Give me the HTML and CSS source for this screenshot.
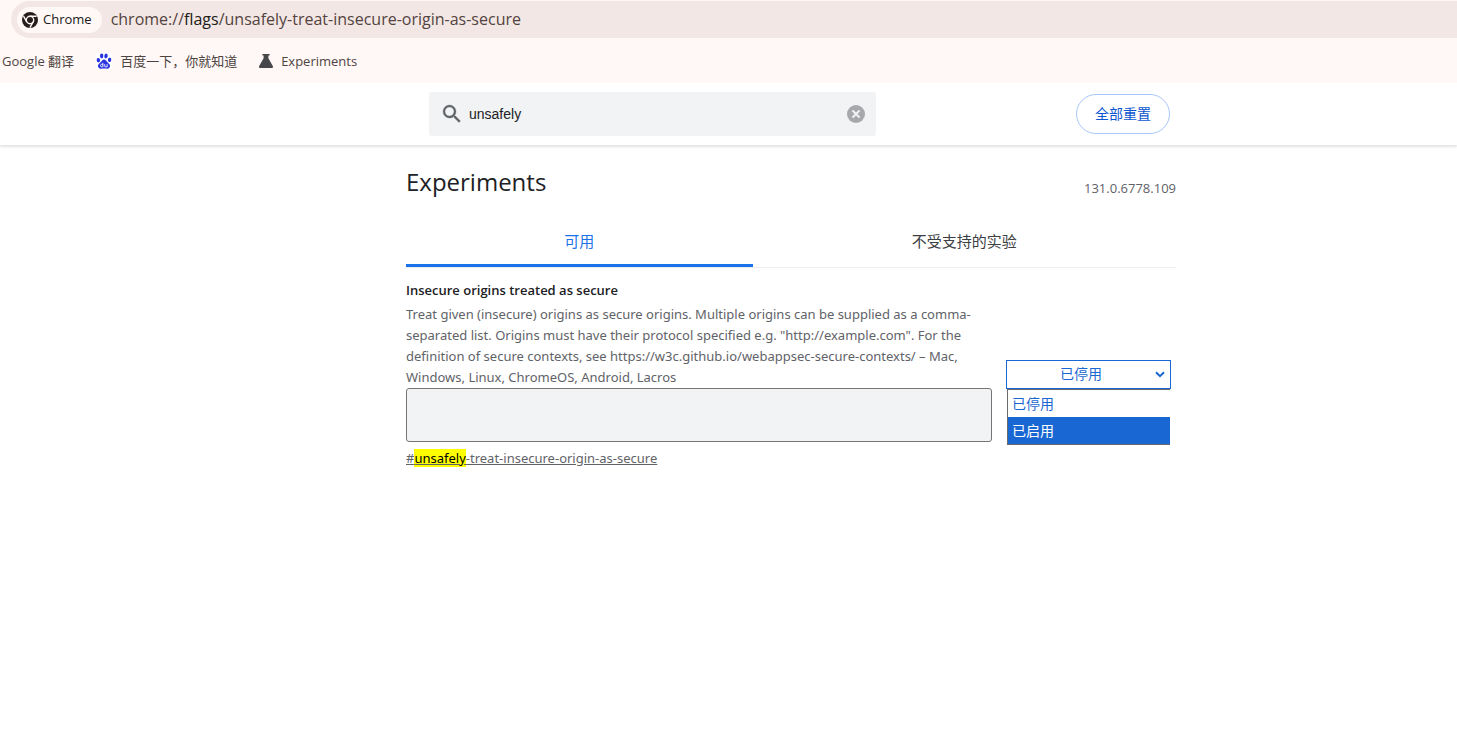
FILE: index.html
```html
<!DOCTYPE html>
<html lang="zh-CN">
<head>
<meta charset="utf-8">
<title>Experiments</title>
<link rel="stylesheet" href="styles.css">
</head>
<body>
<div class="browser">
  <div class="omnibox">
    <button class="chip" type="button">
      <svg width="16" height="16" viewBox="0 0 16 16" aria-hidden="true">
        <circle cx="8" cy="8" r="8" fill="#241d1c"/>
        <circle cx="8" cy="8" r="3.700" fill="none" stroke="#fff8f6" stroke-width="1.400"/>
        <path d="M8 4.300H14.600M4.800 9.850L1.500 4.100M11.200 9.850L7.900 15.600" stroke="#fff8f6" stroke-width="1.400"/>
      </svg>
      Chrome
    </button>
    <span class="url">chrome://<span class="url-host">flags</span>/unsafely-treat-insecure-origin-as-secure</span>
  </div>
  <nav class="bookmarks">
    <a href="#translate">Google 翻译</a>
    <a href="#baidu">
      <svg width="16" height="16" viewBox="0 0 16 16" aria-hidden="true">
        <rect width="16" height="16" fill="#fff"/>
        <g fill="#2932e1">
          <ellipse cx="2.4" cy="7.2" rx="1.7" ry="2.2" transform="rotate(-12 2.4 7.2)"/>
          <ellipse cx="5.7" cy="3" rx="1.7" ry="2.4"/>
          <ellipse cx="10" cy="3" rx="1.7" ry="2.4" transform="rotate(12 10 3)"/>
          <ellipse cx="13.6" cy="6.8" rx="1.7" ry="2.2" transform="rotate(12 13.6 6.8)"/>
          <path d="M8 6.600c1.700 0 2.300 1.500 3.400 2.600 1.300 1.200 2.800 2.200 2.600 4.100-.2 1.900-1.700 2.600-3.300 2.400-1.800-.3-3.600-.3-5.400 0-1.900.3-3.200-.8-3.300-2.600-.1-1.800 1.500-2.800 2.700-3.900C5.800 8.100 6.400 6.600 8 6.600z"/>
        </g>
        <path d="M6.900 9.800v4H5.500c-1.300 0-1.300-2.500 0-2.500h1.400M8.700 11.200v2c0 .5.300.7.800.7h1.600v-2.700" fill="none" stroke="#fff" stroke-width=".9"/>
      </svg>
      百度一下，你就知道
    </a>
    <a href="#experiments">
      <svg width="14" height="14" viewBox="0 0 14 14" aria-hidden="true">
        <path d="M3.400 0h7.200v1.400H9.400v2.800l4.400 7.800c.6 1-.1 2-1.200 2H1.400C.3 14-.4 13 .2 12l4.400-7.800V1.400H3.400z" fill="#45474a"/>
      </svg>
      Experiments
    </a>
  </nav>
</div>
<header class="toolbar">
  <div class="toolbar-inner">
    <div class="search">
      <svg width="24" height="24" viewBox="0 0 24 24" aria-hidden="true">
        <path d="M15.500 14h-.79l-.28-.27A6.470 6.470 0 0 0 16 9.500 6.500 6.500 0 1 0 9.500 16c1.610 0 3.090-.59 4.230-1.570l.27.28v.79l5 4.990L20.490 19l-4.990-5zm-6 0C7.010 14 5 11.990 5 9.500S7.010 5 9.500 5 14 7.010 14 9.500 11.990 14 9.500 14z" fill="#5f6368" stroke="#5f6368" stroke-width=".3"/>
      </svg>
      <input class="search-input" type="text" value="unsafely" aria-label="搜索实验">
      <button class="clear" type="button" aria-label="清除">
        <svg width="18" height="18" viewBox="0 0 18 18" aria-hidden="true">
          <circle cx="9" cy="9" r="9" fill="#a6a8ab"/>
          <path d="M5.500 5.500l7 7M12.500 5.500l-7 7" stroke="#f1f3f4" stroke-width="1.900"/>
        </svg>
      </button>
    </div>
    <button class="reset" type="button">全部重置</button>
  </div>
</header>
<main class="content">
  <div class="heading">
    <h1>Experiments</h1>
    <span class="version">131.0.6778.109</span>
  </div>
  <div class="tabs" role="tablist">
    <button class="tab tab-available selected" type="button" role="tab" aria-selected="true">可用</button>
    <button class="tab tab-unavailable" type="button" role="tab" aria-selected="false">不受支持的实验</button>
  </div>
  <section class="experiment">
    <div class="details">
      <h2>Insecure origins treated as secure</h2>
      <p>Treat given (insecure) origins as secure origins. Multiple origins can be supplied as a comma-separated list. Origins must have their protocol specified e.g. "http://example.com". For the definition of secure contexts, see https://w3c.github.io/webappsec-secure-contexts/ – Mac, Windows, Linux, ChromeOS, Android, Lacros</p>
      <textarea class="origins" aria-label="Insecure origins treated as secure"></textarea>
      <a class="permalink" href="#unsafely-treat-insecure-origin-as-secure">#<mark>unsafely</mark>-treat-insecure-origin-as-secure</a>
    </div>
    <div class="picker">
      <select class="state" aria-label="实验状态">
        <option>已停用</option>
        <option>已启用</option>
      </select>
      <svg class="chevron" width="10" height="7" viewBox="0 0 10 7" aria-hidden="true">
        <path d="M1 1.200l4 4 4-4" fill="none" stroke="#1967d2" stroke-width="2"/>
      </svg>
      <ul class="menu" role="listbox" aria-label="实验状态">
        <li role="option" aria-selected="false">已停用</li>
        <li class="active" role="option" aria-selected="true">已启用</li>
      </ul>
    </div>
  </section>
</main>
</body>
</html>
```
FILE: styles.css
```css
* {
  box-sizing: border-box;
}

body {
  margin: 0;
  background: #fff;
  color: #202124;
  font: 13px/21px "Open Sans", "Noto Sans CJK SC", sans-serif;
}

button,
input,
select,
textarea {
  font: inherit;
}

button {
  cursor: pointer;
}

.browser {
  background: #fff8f6;
}

.omnibox {
  display: flex;
  align-items: center;
  gap: 9px;
  height: 38px;
  margin-left: 11px;
  padding: 0 6px;
  background: #f2e7e4;
  border-radius: 19px 0 0 19px;
  border-top: 1px solid #fff8f6;
}

.chip {
  display: flex;
  align-items: center;
  gap: 5px;
  height: 26px;
  padding: 0 10px 0 5px;
  border: 0;
  border-radius: 13px;
  background: #fff8f6;
  color: #201a19;
}

.url {
  color: #534341;
  font-size: 16px;
}

.url-host {
  color: #201a19;
}

.bookmarks {
  display: flex;
  align-items: center;
  gap: 22px;
  height: 45px;
  padding: 1px 2px 0;
}

.bookmarks a {
  display: flex;
  align-items: center;
  gap: 8px;
  color: #4d4442;
  text-decoration: none;
}

.toolbar {
  padding-left: 125px;
  background: #fff;
  box-shadow: 0 2px 2px rgba(60, 64, 67, 0.15);
}

.toolbar-inner {
  display: flex;
  align-items: center;
  justify-content: space-between;
  max-width: 770px;
  height: 62px;
  margin: 0 auto;
  padding: 0 6px 0 23px;
}

.search {
  display: flex;
  align-items: center;
  flex: 0 1 447px;
  gap: 5px;
  height: 44px;
  padding: 0 11px;
  border-radius: 3px;
  background: #f1f3f4;
}

.search-input {
  flex: 1;
  min-width: 0;
  padding: 0;
  border: 0;
  outline: 0;
  background: none;
  color: #202124;
  font: 14px "Liberation Sans", sans-serif;
}

.clear {
  display: flex;
  padding: 0;
  border: 0;
  background: none;
}

.reset {
  height: 40px;
  padding: 0 18px 2px;
  border: 1px solid #a8c7fa;
  border-radius: 20px;
  background: #fff;
  color: #0b57d0;
  font-size: 14px;
}

.content {
  max-width: 895px;
  margin: 0 auto;
  padding-left: 125px;
}

.heading {
  display: flex;
  justify-content: space-between;
  align-items: center;
  padding-top: 19px;
}

h1 {
  margin: 0;
  font-size: 24px;
  line-height: 34px;
  font-weight: 400;
}

.version {
  padding-top: 14px;
  color: #5f6368;
}

.tabs {
  display: flex;
  margin-top: 17px;
  border-bottom: 1px solid #ededee;
}

.tab {
  height: 51px;
  padding: 3px 0 0;
  border: 0;
  border-bottom: 3px solid transparent;
  background: none;
  color: #3c4043;
  font-size: 15px;
}

.tab-available {
  flex: 9 1 0;
}

.tab-unavailable {
  flex: 11 1 0;
}

.selected {
  color: #1a73e8;
  border-color: #1a73e8;
  border-radius: 2px 2px 0 0;
}

.experiment {
  display: flex;
  align-items: center;
  gap: 14px;
  padding: 12px 5px 0 0;
}

.details {
  flex: 1;
}

h2 {
  margin: 0 0 3px;
  font-size: 13px;
  line-height: 21px;
  font-weight: 600;
}

p {
  margin: 0;
  color: #5f6368;
  font-family: "Noto Sans", sans-serif;
}

.origins {
  display: block;
  width: 100%;
  height: 54px;
  margin-bottom: 6px;
  border: 1px solid #757575;
  border-radius: 3px;
  background: #f1f3f4;
  resize: none;
}

.permalink {
  color: #5f6368;
  font-family: "Noto Sans", sans-serif;
}

mark {
  background: #ff0;
  color: #000;
}

.picker {
  position: relative;
  width: 165px;
}

.state {
  display: block;
  width: 100%;
  height: 29px;
  padding: 0 15px 2px 0;
  appearance: none;
  border: 1px solid #1967d2;
  border-radius: 0;
  background: #fff;
  color: #1967d2;
  font-size: 14px;
  text-align: center;
  text-align-last: center;
}

.chevron {
  position: absolute;
  top: 11px;
  right: 6px;
  pointer-events: none;
}

.menu {
  position: absolute;
  top: 100%;
  left: 1px;
  right: 1px;
  margin: 0;
  padding: 0;
  list-style: none;
  border: 1px solid #6b6b6b;
  border-right: 0;
  background: #fff;
  color: #1967d2;
  font-size: 14px;
  line-height: 27px;
}

.menu li {
  padding-left: 4px;
}

.menu .active {
  background: #1967d2;
  color: #fff;
}
```
